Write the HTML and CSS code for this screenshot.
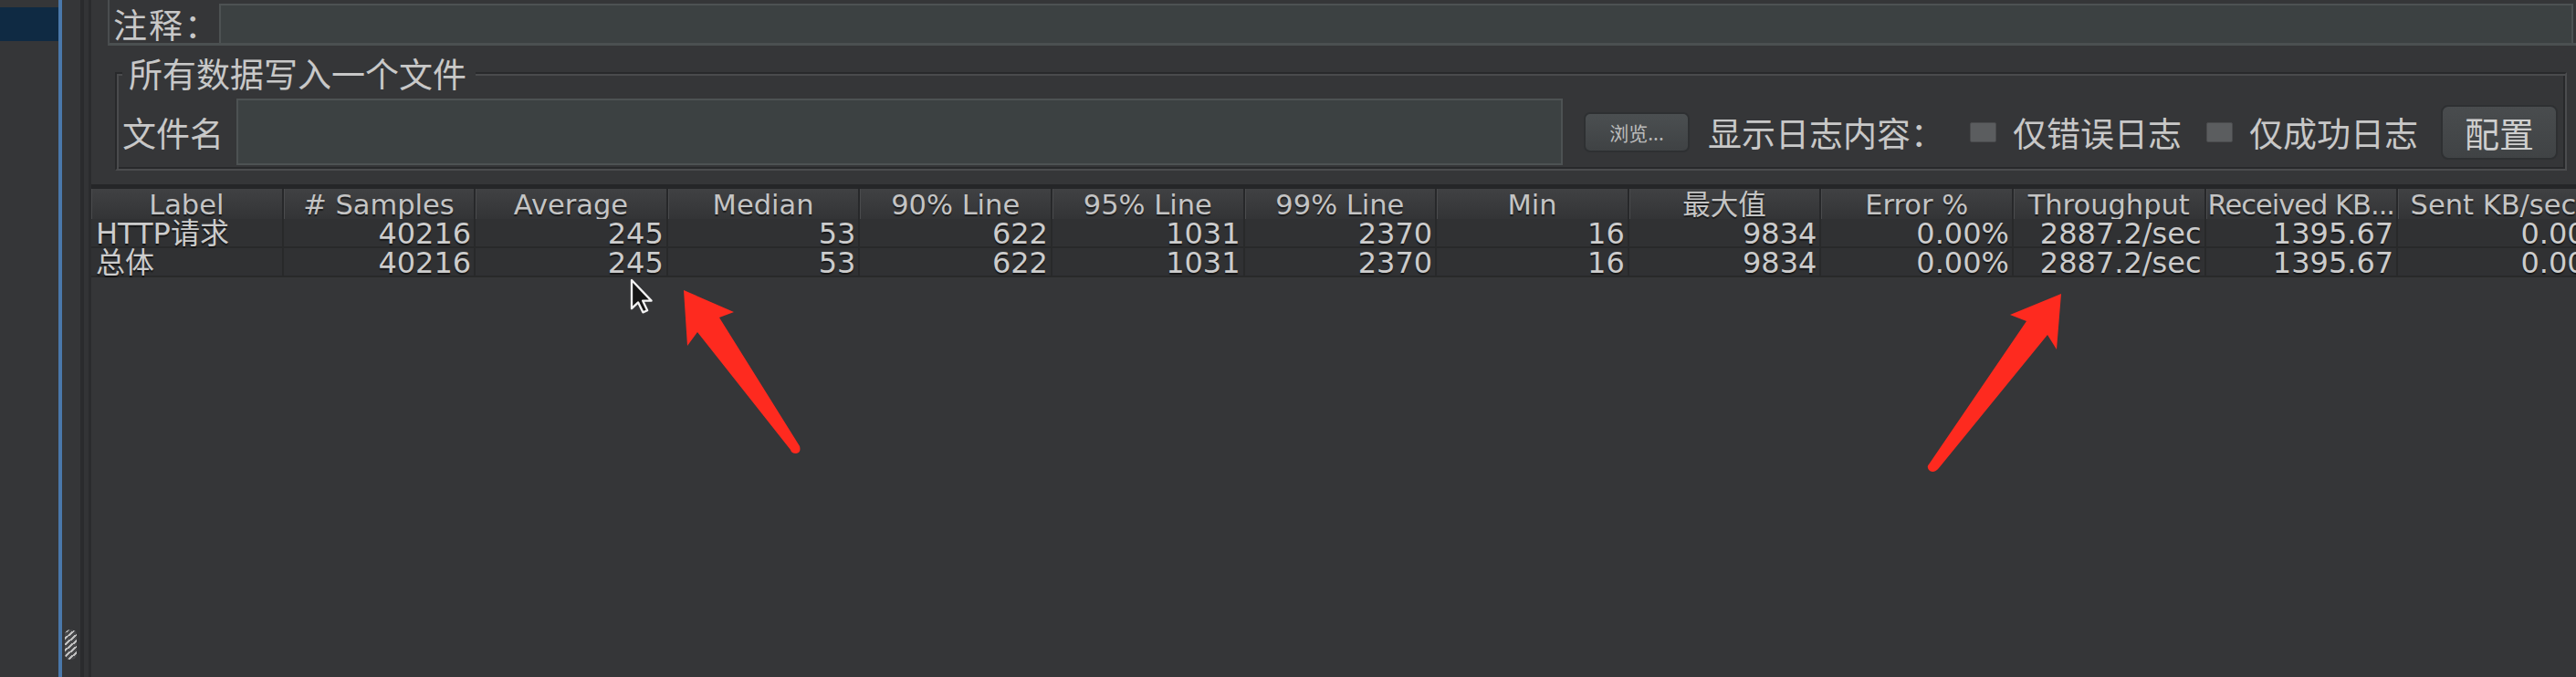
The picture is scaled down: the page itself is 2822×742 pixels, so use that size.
FILE: index.html
```html
<!DOCTYPE html>
<html lang="zh-CN">
<head>
<meta charset="utf-8">
<title>聚合报告</title>
<link rel="stylesheet" href="styles.css">
</head>
<body>
<div class="app">
  <aside class="tree">
    <div class="tree-sel"></div>
  </aside>
  <div class="divider"></div>
  <div class="split"><div class="grip"></div></div>
  <div class="edge"></div>
  <main class="content">
    <div class="comment-row">
      <span class="lbl comment-lbl">注释：</span>
      <div class="field comment-field"></div>
    </div>
    <fieldset class="group">
      <legend class="legend">所有数据写入一个文件</legend>
      <div class="file-row">
        <span class="lbl file-lbl">文件名</span>
        <div class="field file-field"></div>
        <button class="btn btn-browse">浏览...</button>
        <span class="lbl log-lbl">显示日志内容：</span>
        <span class="chk"></span>
        <span class="lbl chk-lbl">仅错误日志</span>
        <span class="chk chk2"></span>
        <span class="lbl chk-lbl">仅成功日志</span>
        <button class="btn btn-config">配置</button>
      </div>
    </fieldset>
    <div class="table">
      <div class="th">Label</div>
      <div class="th"># Samples</div>
      <div class="th">Average</div>
      <div class="th">Median</div>
      <div class="th">90% Line</div>
      <div class="th">95% Line</div>
      <div class="th">99% Line</div>
      <div class="th">Min</div>
      <div class="th">最大值</div>
      <div class="th">Error %</div>
      <div class="th">Throughput</div>
      <div class="th th-tight">Received KB...</div>
      <div class="th">Sent KB/sec</div>

      <div class="td td-label">HTTP请求</div>
      <div class="td">40216</div>
      <div class="td">245</div>
      <div class="td">53</div>
      <div class="td">622</div>
      <div class="td">1031</div>
      <div class="td">2370</div>
      <div class="td">16</div>
      <div class="td">9834</div>
      <div class="td">0.00%</div>
      <div class="td">2887.2/sec</div>
      <div class="td">1395.67</div>
      <div class="td">0.00</div>

      <div class="td td-label">总体</div>
      <div class="td">40216</div>
      <div class="td">245</div>
      <div class="td">53</div>
      <div class="td">622</div>
      <div class="td">1031</div>
      <div class="td">2370</div>
      <div class="td">16</div>
      <div class="td">9834</div>
      <div class="td">0.00%</div>
      <div class="td">2887.2/sec</div>
      <div class="td">1395.67</div>
      <div class="td">0.00</div>
    </div>
  </main>
</div>
<svg class="overlay" width="2822" height="742" viewBox="0 0 2822 742" xmlns="http://www.w3.org/2000/svg">
  <path d="M749 318 L804 342 L788 348 L876 489 Q878 496 872 497 Q867 497 866 493 L764 364 L753 379 Z" fill="#fe2a1f"/>
  <path d="M2258 322 L2253 383 L2243 367 L2124 513 Q2119 519 2114 516 Q2110 512 2113 509 L2220 352 L2202 345 Z" fill="#fe2a1f"/>
  <g transform="translate(692 307) scale(1.3)">
    <path d="M0 0 L0 24 L5.5 18.8 L9.5 27.2 L13.2 25.6 L9.3 17.4 L16.6 17.4 Z" fill="#151515" stroke="#f2f2f2" stroke-width="1.8" stroke-linejoin="round"/>
  </g>
</svg>
</body>
</html>
```
FILE: styles.css
```css
* { box-sizing: border-box; }
html, body { margin: 0; padding: 0; }
body {
  width: 2822px;
  height: 742px;
  overflow: hidden;
  position: relative;
  background: #353638;
  color: #c6c6c6;
  font-family: "Noto Sans CJK SC", "DejaVu Sans", sans-serif;
}
.app { display: flex; height: 742px; }

.tree { width: 64px; flex: none; background: #353638; padding-top: 8px; }
.tree-sel { height: 37px; background: #0f2a43; }
.divider { width: 4px; flex: none; background: #4a78aa; }
.split {
  width: 20px; flex: none;
  display: flex; flex-direction: column; justify-content: flex-end;
  padding: 0 0 19px 3px;
}
.grip {
  width: 13px; height: 33px; border-radius: 6px;
  background: repeating-linear-gradient(-40deg, #d8d8d8 0 2px, #4a4b4d 2px 5px);
  opacity: .85;
}
.edge {
  width: 12px; flex: none;
  background: #333436;
  border-left: 4px solid #2a2b2d;
  border-right: 3px solid #2b2c2e;
}

.content {
  flex: 1; min-width: 0;
  display: flex; flex-direction: column;
  overflow: hidden;
}

.lbl { font-size: 37px; line-height: 44px; color: #c8c8c8; white-space: nowrap; flex: none; }

.comment-row {
  display: flex; align-items: center;
  height: 50px;
  margin-left: 18px;
  padding-top: 4px;
  border-left: 2px solid #4a4d4f;
  border-bottom: 3px solid #4b5051;
}
.comment-lbl { width: 120px; padding-left: 4px; letter-spacing: 2px; }
.field {
  background: #3c4142;
  border: 2px solid #4d5253;
}
.comment-field {
  flex: 1; height: 43px;
  margin-right: 3px;
  border-bottom: 0;
}

.group {
  margin: 8px 10px 0 26px;
  padding: 0 0 4px 6px;
  min-width: 0;
  border: 2px solid;
  border-color: #28292b #4b4c4e #4b4c4e #28292b;
  box-shadow: inset 2px 2px 0 #4a4b4d, inset -2px -2px 0 #28292b;
}
.legend {
  padding: 0 10px 0 7px;
  font-size: 37px; line-height: 44px;
  color: #c8c8c8;
  background: #353638;
  position: relative;
}
.file-row {
  display: flex; align-items: center;
  margin-top: 6px;
  height: 73px;
}
.file-lbl { width: 125px; }
.file-field { width: 1453px; height: 73px; flex: none; }

.btn {
  flex: none;
  font-family: "Noto Sans CJK SC", sans-serif;
  background: linear-gradient(#4b4f51, #3f4244);
  border: 2px solid #2e3032;
  padding: 0;
  cursor: default;
}
.btn-browse {
  margin-left: 23px;
  width: 116px; height: 44px;
  border-radius: 7px;
  font-size: 21px; color: #bcbcbc;
}
.log-lbl { margin-left: 20px; width: 267px; }
.chk {
  flex: none;
  width: 29px; height: 22px;
  margin-left: 20px;
  background: #5b5d5f;
  border: 1px solid #4a4b4d;
  border-radius: 2px;
}
.chk2 { margin-left: 22px; }
.chk-lbl { margin-left: 18px; width: 190px; }
.btn-config {
  margin-left: 20px;
  width: 128px; height: 60px;
  border-radius: 8px;
  font-size: 38px; color: #cfcfcf;
  background: linear-gradient(#494c4e, #404345);
}

.table {
  margin-top: 15px;
  display: grid;
  grid-template-columns: repeat(13, 210.6px);
  width: max-content;
  border-top: 5px solid #252628;
  font-family: "DejaVu Sans", "Noto Sans CJK SC", sans-serif;
}
.th {
  height: 33px;
  padding-top: 3px;
  line-height: 30px;
  font-size: 30.5px;
  text-align: center;
  white-space: nowrap;
  color: #c4c4c4;
  text-shadow: 0 2px 1px #1b1c1d;
  background: linear-gradient(#404143, #333436);
  border-right: 2px solid #27282a;
  box-shadow: inset 1px 0 0 #4a4b4d;
}
.th-tight { letter-spacing: -1px; }
.td {
  height: 32px;
  padding-top: 3px;
  line-height: 27px;
  font-size: 32px;
  text-align: right;
  padding-right: 3px;
  white-space: nowrap;
  color: #cccccc;
  text-shadow: 0 2px 1px rgba(0,0,0,.55);
  background: #303133;
  border-right: 2px solid #28292a;
  border-bottom: 2px solid #28292a;
}
.td-label { text-align: left; padding-left: 5px; padding-right: 0; }

.overlay { position: absolute; left: 0; top: 0; pointer-events: none; }
```
